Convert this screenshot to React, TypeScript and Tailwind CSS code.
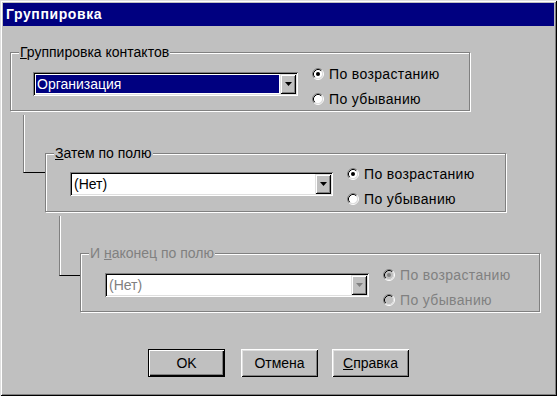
import React from "react";

const FONT = "font-['Liberation_Sans',Arial,sans-serif]";

function Radio({ checked, disabled }: { checked?: boolean; disabled?: boolean }) {
  return (
    <svg width="12" height="12" viewBox="0 0 12 12" className="shrink-0">
      <circle cx="6" cy="6" r="4.5" fill={disabled ? "#c0c0c0" : "#ffffff"} />
      <path d="M2.11 9.89 A5.5 5.5 0 0 1 9.89 2.11" fill="none" stroke="#808080" strokeWidth="1" />
      <path d="M9.89 2.11 A5.5 5.5 0 0 1 2.11 9.89" fill="none" stroke="#ffffff" strokeWidth="1" />
      <path d="M2.82 9.18 A4.5 4.5 0 0 1 9.18 2.82" fill="none" stroke="#000000" strokeWidth="1" />
      <path d="M9.18 2.82 A4.5 4.5 0 0 1 2.82 9.18" fill="none" stroke="#dfdfdf" strokeWidth="1" />
      {checked && <circle cx="6" cy="6" r="2" fill={disabled ? "#808080" : "#000000"} />}
    </svg>
  );
}

function RadioGroup({ disabled }: { disabled?: boolean }) {
  const txt = disabled ? "text-[#808080]" : "text-black";
  return (
    <div className="flex flex-col gap-[9px]">
      <div className="flex items-center h-[16px] gap-[5px]">
        <Radio checked disabled={disabled} />
        <span className={`text-[14px] leading-[16px] tracking-[0.35px] ${txt}`}>По возрастанию</span>
      </div>
      <div className="flex items-center h-[16px] gap-[5px]">
        <Radio disabled={disabled} />
        <span className={`text-[14px] leading-[16px] tracking-[0.35px] ${txt}`}>По убыванию</span>
      </div>
    </div>
  );
}

function Combo({
  value,
  selected,
  disabled,
  width,
}: {
  value: string;
  selected?: boolean;
  disabled?: boolean;
  width: string;
}) {
  return (
    <div
      className={`${width} h-[24px] flex bg-white shadow-[inset_1px_1px_0_#808080,inset_-1px_-1px_0_#ffffff,inset_2px_2px_0_#000000,inset_-2px_-2px_0_#dfdfdf] p-[2px]`}
    >
      <div className="flex-1 flex p-[1px] min-w-0">
        {selected ? (
          <div className="flex-1 bg-[#000080] text-white text-[14px] leading-[18px] pl-[1px]">{value}</div>
        ) : (
          <div className={`flex-1 text-[14px] leading-[18px] pl-[1px] ${disabled ? "text-[#808080]" : "text-black"}`}>
            {value}
          </div>
        )}
      </div>
      <div className="w-[16px] h-[20px] bg-[#c0c0c0] flex items-center justify-center shadow-[inset_1px_1px_0_#dfdfdf,inset_-1px_-1px_0_#000000,inset_2px_2px_0_#ffffff,inset_-2px_-2px_0_#808080]">
        <svg width="7" height="4" viewBox="0 0 7 4">
          <path d="M0 0 H7 L3.5 4 Z" fill={disabled ? "#808080" : "#000000"} />
        </svg>
      </div>
    </div>
  );
}

function GroupBox({
  label,
  width,
  disabled,
  children,
}: {
  label: React.ReactNode;
  width: string;
  disabled?: boolean;
  children: React.ReactNode;
}) {
  return (
    <div
      className={`relative ${width} h-[59px] border border-[#808080] shadow-[1px_1px_0_#ffffff,inset_1px_1px_0_#ffffff] shrink-0`}
    >
      <div
        className={`absolute left-[8px] top-[-9px] bg-[#c0c0c0] px-[1px] text-[14px] leading-[16px] ${
          disabled ? "text-[#808080]" : "text-black"
        }`}
      >
        {label}
      </div>
      {children}
    </div>
  );
}

function Button({ children, isDefault, className }: { children: React.ReactNode; isDefault?: boolean; className?: string }) {
  return (
    <div
      className={`w-[77px] h-[28px] bg-[#c0c0c0] flex items-center justify-center text-[14px] text-black ${
        isDefault
          ? "shadow-[inset_0_0_0_1px_#000000,inset_2px_2px_0_#ffffff,inset_-2px_-2px_0_#000000,inset_-3px_-3px_0_#808080]"
          : "shadow-[inset_1px_1px_0_#ffffff,inset_-1px_-1px_0_#000000,inset_2px_2px_0_#dfdfdf,inset_-2px_-2px_0_#808080]"
      } ${className ?? ""}`}
    >
      {children}
    </div>
  );
}

function Connector({ className }: { className: string }) {
  return (
    <div className={`shrink-0 border-l border-[#808080] border-b border-b-black ${className}`}>
      <div className="h-full w-[1px] bg-white" />
    </div>
  );
}

export default function App() {
  return (
    <div
      className={`${FONT} w-[557px] h-[396px] bg-[#c0c0c0] p-[3px] flex flex-col shadow-[inset_1px_1px_0_#dfdfdf,inset_-1px_-1px_0_#000000,inset_2px_2px_0_#ffffff,inset_-2px_-2px_0_#808080] overflow-hidden`}
    >
      <div className="h-[23px] bg-[#000080] text-white font-bold text-[14px] tracking-[0.6px] flex items-center pl-[3px] shrink-0">
        Группировка
      </div>

      {/* Group 1 */}
      <div className="ml-[7px] mt-[26px]">
        <GroupBox
          width="w-[460px]"
          label={
            <>
              <span className="underline">Г</span>руппировка контактов
            </>
          }
        >
          <div className="flex items-start pl-[22px]">
            <div className="mt-[19px]">
              <Combo value="Организация" selected width="w-[265px]" />
            </div>
            <div className="ml-[14px] mt-[13px]">
              <RadioGroup />
            </div>
          </div>
        </GroupBox>
      </div>

      {/* Group 2 */}
      <div className="flex items-start">
        <Connector className="ml-[20px] mt-[4px] w-[22px] h-[58px]" />
        <div className="mt-[42px]">
          <GroupBox
            width="w-[461px]"
            label={
              <>
                <span className="underline">З</span>атем по полю
              </>
            }
          >
            <div className="flex items-start pl-[24px]">
              <div className="mt-[18px]">
                <Combo value="(Нет)" width="w-[263px]" />
              </div>
              <div className="ml-[14px] mt-[12px]">
                <RadioGroup />
              </div>
            </div>
          </GroupBox>
        </div>
      </div>

      {/* Group 3 */}
      <div className="flex items-start">
        <Connector className="ml-[56px] mt-[4px] w-[21px] h-[60px]" />
        <div className="mt-[41px]">
          <GroupBox
            width="w-[460px]"
            disabled
            label={
              <>
                И <span className="underline">н</span>аконец по полю
              </>
            }
          >
            <div className="flex items-start pl-[24px]">
              <div className="mt-[19px]">
                <Combo value="(Нет)" disabled width="w-[264px]" />
              </div>
              <div className="ml-[14px] mt-[13px]">
                <RadioGroup disabled />
              </div>
            </div>
          </GroupBox>
        </div>
      </div>

      {/* Buttons */}
      <div className="flex mt-[37px] ml-[145px]">
        <Button isDefault>OK</Button>
        <Button className="ml-[16px]">Отмена</Button>
        <Button className="ml-[14px]">
          <span>
            <span className="underline">С</span>правка
          </span>
        </Button>
      </div>
    </div>
  );
}
